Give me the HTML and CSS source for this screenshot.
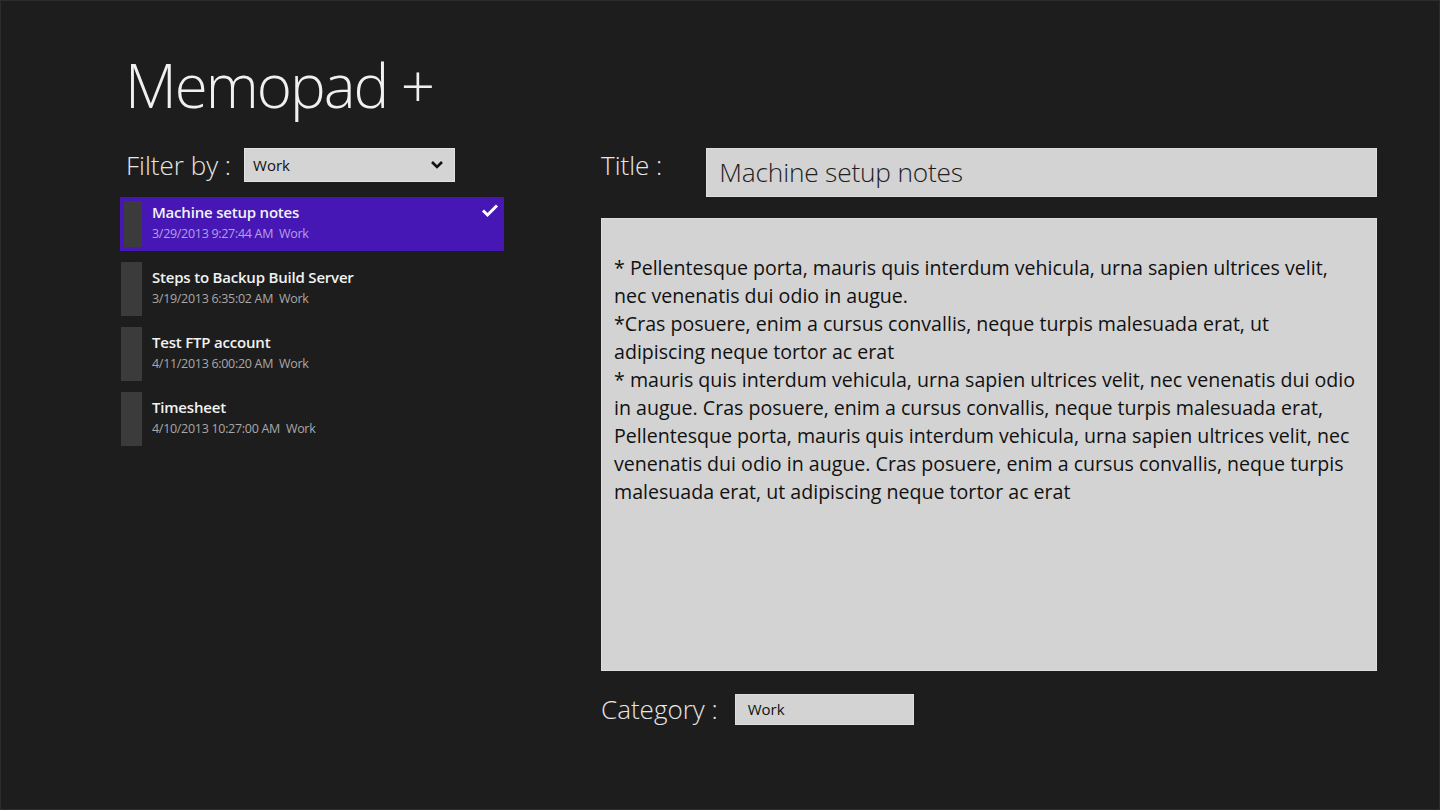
FILE: index.html
```html
<!DOCTYPE html>
<html lang="en">
<head>
<meta charset="utf-8">
<title>Memopad +</title>
<link rel="stylesheet" href="styles.css">
</head>
<body>
<div class="app">
  <h1 class="app-title">Memopad +</h1>
  <div class="columns">
    <section class="left">
      <div class="filter-row">
        <span class="label">Filter by :</span>
        <div class="select">
          <span>Work</span>
          <svg class="chevron" width="14" height="10" viewBox="0 0 14 10"><path d="M2 2 L7 7 L12 2" fill="none" stroke="#111" stroke-width="2.6"/></svg>
        </div>
      </div>
      <ul class="memo-list">
        <li class="memo selected">
          <div class="swatch"></div>
          <div class="memo-text">
            <div class="memo-title">Machine setup notes</div>
            <div class="memo-meta">3/29/2013 9:27:44 AM&nbsp; Work</div>
          </div>
          <svg class="check" width="18" height="15" viewBox="0 0 18 15"><path d="M2 7.5 L6.5 12 L16 2.5" fill="none" stroke="#fff" stroke-width="3"/></svg>
        </li>
        <li class="memo">
          <div class="swatch"></div>
          <div class="memo-text">
            <div class="memo-title">Steps to Backup Build Server</div>
            <div class="memo-meta">3/19/2013 6:35:02 AM&nbsp; Work</div>
          </div>
        </li>
        <li class="memo">
          <div class="swatch"></div>
          <div class="memo-text">
            <div class="memo-title">Test FTP account</div>
            <div class="memo-meta">4/11/2013 6:00:20 AM&nbsp; Work</div>
          </div>
        </li>
        <li class="memo">
          <div class="swatch"></div>
          <div class="memo-text">
            <div class="memo-title">Timesheet</div>
            <div class="memo-meta">4/10/2013 10:27:00 AM&nbsp; Work</div>
          </div>
        </li>
      </ul>
    </section>
    <section class="right">
      <div class="title-row">
        <span class="label title-label">Title :</span>
        <div class="title-input">Machine setup notes</div>
      </div>
      <div class="body-input"><p>&nbsp;</p><p>* Pellentesque porta, mauris quis interdum vehicula, urna sapien ultrices velit, nec venenatis dui odio in augue.</p><p>*Cras posuere, enim a cursus convallis, neque turpis malesuada erat, ut adipiscing neque tortor ac erat</p><p>* mauris quis interdum vehicula, urna sapien ultrices velit, nec venenatis dui odio in augue. Cras posuere, enim a cursus convallis, neque turpis malesuada erat, Pellentesque porta, mauris quis interdum vehicula, urna sapien ultrices velit, nec venenatis dui odio in augue. Cras posuere, enim a cursus convallis, neque turpis malesuada erat, ut adipiscing neque tortor ac erat</p></div>
      <div class="category-row">
        <span class="label">Category :</span>
        <div class="category-input">Work</div>
      </div>
    </section>
  </div>
</div>
</body>
</html>
```
FILE: styles.css
```css
* { box-sizing: border-box; }
html, body { margin: 0; padding: 0; }
body {
  width: 1440px;
  height: 810px;
  background: #1d1d1d;
  font-family: "Open Sans", "Noto Sans", sans-serif;
  color: #e8e8e8;
  overflow: hidden;
  border: 1px solid #2c2c2c;
}
.app { padding: 44px 0 0 119px; }
.app-title {
  margin: 0 0 0 5px;
  font-weight: 300;
  font-size: 60px;
  line-height: 80px;
  letter-spacing: -2px;
  color: #f0f0f0;
}
.columns { display: flex; margin-top: 23px; }
.left { width: 384px; flex: none; }
.right { margin-left: 97px; width: 776px; flex: none; }
.label {
  font-weight: 300;
  font-size: 26px;
  line-height: 34px;
  color: #e6e6e6;
  white-space: nowrap;
  flex: none;
}
.filter-row { display: flex; align-items: center; padding-left: 6px; height: 34px; }
.select {
  margin-left: 13px;
  width: 211px;
  height: 34px;
  background: #d4d4d4;
  border: 1px solid #e2e2e2;
  display: flex;
  align-items: center;
  justify-content: space-between;
  padding: 0 10px 0 8px;
  font-size: 15px;
  color: #111;
}
.chevron { display: block; }
.memo-list { list-style: none; margin: 15px 0 0 0; padding: 0; display: flex; flex-direction: column; gap: 11px; }
.memo {
  position: relative;
  display: flex;
  height: 54px;
  padding: 0 0 0 1px;
}
.memo.selected { background: #4617b4; padding: 4px 0 4px 4px; }
.swatch { width: 21px; height: 54px; background: #3b3b3b; flex: none; }
.memo.selected .swatch { width: 18px; height: 46px; }
.memo-text { margin-left: 10px; padding-top: 5px; }
.memo.selected .memo-text { margin-left: 10px; padding-top: 1px; }
.memo-title { font-size: 15px; font-weight: 600; line-height: 20px; color: #f2f2f2; letter-spacing: -0.2px; }
.memo-meta { font-size: 12.5px; line-height: 20px; margin-top: 2px; color: #a8a8a8; letter-spacing: -0.3px; }
.memo.selected .memo-meta { color: #b4a0e6; }
.check { position: absolute; right: 5px; top: 6px; }
.title-row { display: flex; align-items: flex-start; }
.title-label { margin-top: 0; }
.title-input {
  margin-left: 44px;
  width: 671px;
  height: 49px;
  background: #d3d3d3;
  border: 1px solid #dedede;
  font-size: 26.3px;
  font-weight: 300;
  line-height: 47px;
  padding-left: 12px;
  color: #1e1e1e;
  letter-spacing: -0.2px;
}
.body-input {
  margin-top: 21px;
  height: 453px;
  background: #d3d3d3;
  border: 1px solid #dedede;
  padding: 7px 12px;
  color: #111;
  font-size: 19.6px;
  line-height: 28px;
}
.body-input p { margin: 0; }
.category-row { display: flex; align-items: center; margin-top: 21px; }
.category-input {
  margin-left: 17px;
  width: 179px;
  height: 31px;
  background: #d3d3d3;
  border: 1px solid #dedede;
  font-size: 15px;
  line-height: 29px;
  padding-left: 12px;
  color: #111;
}
```
